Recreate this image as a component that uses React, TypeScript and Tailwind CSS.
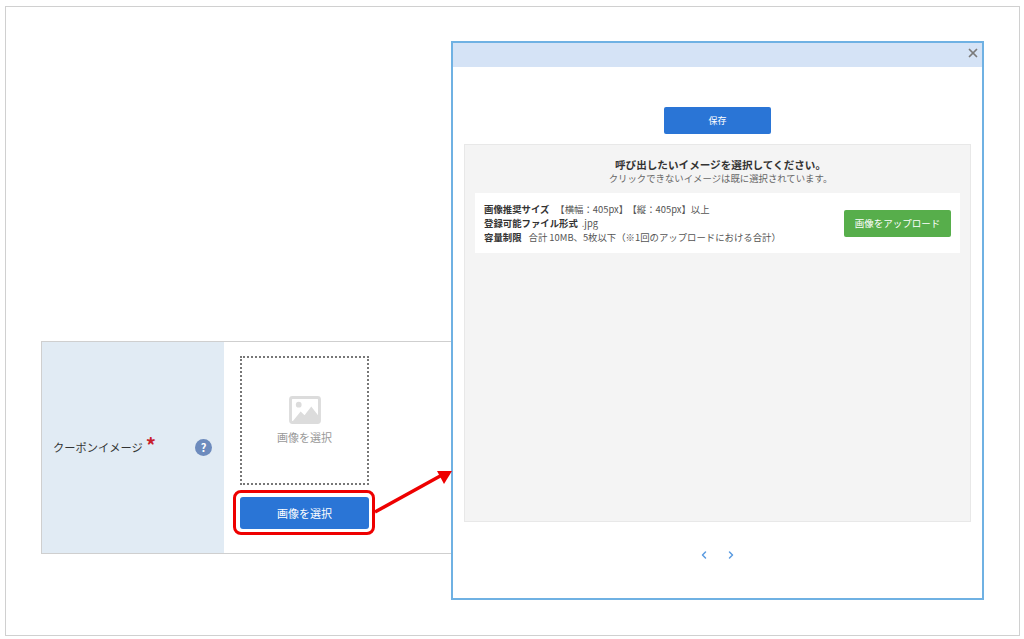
import { ChevronLeft, ChevronRight, X } from 'lucide-react'

const fontFamily = 'font-["Noto_Sans_CJK_JP","Noto_Sans",sans-serif]'

function ImagePlaceholderIcon() {
  return (
    <svg width="32" height="28" viewBox="0 0 33 29" className="block">
      <rect x="1.5" y="1.5" width="30" height="26" rx="2" fill="none" stroke="#dcdcdc" strokeWidth="3" />
      <circle cx="10" cy="9" r="3" fill="#dcdcdc" />
      <path d="M4 26 L12 16 L16 20 L23 11 L30 20 L30 26 Z" fill="#dcdcdc" />
    </svg>
  )
}

function CouponImageRow() {
  return (
    <div className="ml-[35px] mt-[334px] flex h-[213px] w-[440px] border border-[#cfcfcf]">
      <div className="flex w-[182px] items-center bg-[#e1ebf4] pl-[11px] pr-3">
        <span className="text-[11.25px] text-[#333]">クーポンイメージ</span>
        <span className="relative top-[-3px] ml-[3px] text-[20px] font-bold leading-none text-[#c8202c]">*</span>
        <span className="ml-auto flex h-[17px] w-[17px] items-center justify-center rounded-full bg-[#6d8bbd] text-[11px] font-bold text-white">?</span>
      </div>
      <div className="flex flex-1 flex-col pl-[16px] pt-[14px]">
        <div className="flex h-[129px] w-[129px] flex-col items-center justify-center border-2 border-dotted border-[#777]">
          <ImagePlaceholderIcon />
          <span className="mt-[5px] text-[11px] text-[#999]">画像を選択</span>
        </div>
        <button className="mt-[12px] h-[32px] w-[129px] rounded-[3px] bg-[#2a75d6] text-[11px] text-white">画像を選択</button>
      </div>
    </div>
  )
}

function SelectImageModal() {
  return (
    <div className="absolute left-[445px] top-[34px] flex h-[559px] w-[533px] flex-col border-2 border-[#6fb1e3] bg-white">
      <div className="flex h-[24px] justify-end bg-[#d5e3f6] pr-[2px] pt-[3px]">
        <X size={14} strokeWidth={3} className="text-[#7a7a7a]" />
      </div>
      <div className="flex justify-center pt-[40px]">
        <button className="h-[27px] w-[107px] rounded-[2px] bg-[#2a75d6] text-[9px] text-white">保存</button>
      </div>
      <div className="mx-[11px] mt-[10px] h-[378px] border border-[#e8e8e8] bg-[#f4f4f4] px-[10px] pt-[13px]">
        <p className="pl-[6px] text-center text-[10.6px] font-bold leading-[14px] text-[#333]">呼び出したいイメージを選択してください。</p>
        <p className="pl-[6px] text-center text-[9.4px] leading-[13px] text-[#666]">クリックできないイメージは既に選択されています。</p>
        <div className="mt-[8px] flex h-[60px] items-center justify-between bg-white px-[9px]">
          <div className="text-[9.4px] leading-[14px] text-[#555]">
            <p>
              <b className="font-bold text-[#333]">画像推奨サイズ</b>
              <span className="ml-[6px]">【横幅：405px】</span>
              <span className="ml-[4px]">【縦：405px】以上</span>
            </p>
            <p><b className="font-bold text-[#333]">登録可能ファイル形式</b><span className="ml-[4px]">.jpg</span></p>
            <p><b className="font-bold text-[#333]">容量制限</b><span className="ml-[7px]">合計 10MB、5枚以下（※1回のアップロードにおける合計）</span></p>
          </div>
          <button className="h-[27px] w-[107px] rounded-[2px] bg-[#57ae4b] text-[9.5px] text-white">画像をアップロード</button>
        </div>
      </div>
      <div className="mt-[27px] flex justify-center gap-[15px] text-[#5b9be0]">
        <ChevronLeft size={12} strokeWidth={3} />
        <ChevronRight size={12} strokeWidth={3} />
      </div>
    </div>
  )
}

export default function App() {
  return (
    <div className={`h-[639px] w-[1024px] overflow-hidden bg-white pl-[5px] pt-[6px] ${fontFamily}`}>
      <div className="relative h-[630px] w-[1015px] border border-[#d0d0d0]">
        <CouponImageRow />
        <SelectImageModal />
        {/* callout around the button */}
        <div className="absolute left-[227px] top-[483px] h-[45px] w-[142px] rounded-[8px] border-[3px] border-[#ee0000]" />
        {/* arrow from the button to the dialog */}
        <svg className="absolute left-[360px] top-[450px]" width="90" height="70" viewBox="0 0 90 70">
          <path d="M9 55 L76 18" stroke="#ee0000" strokeWidth="3.5" fill="none" />
          <path d="M86 14 L71 14 L78 27 Z" fill="#ee0000" />
        </svg>
      </div>
    </div>
  )
}
